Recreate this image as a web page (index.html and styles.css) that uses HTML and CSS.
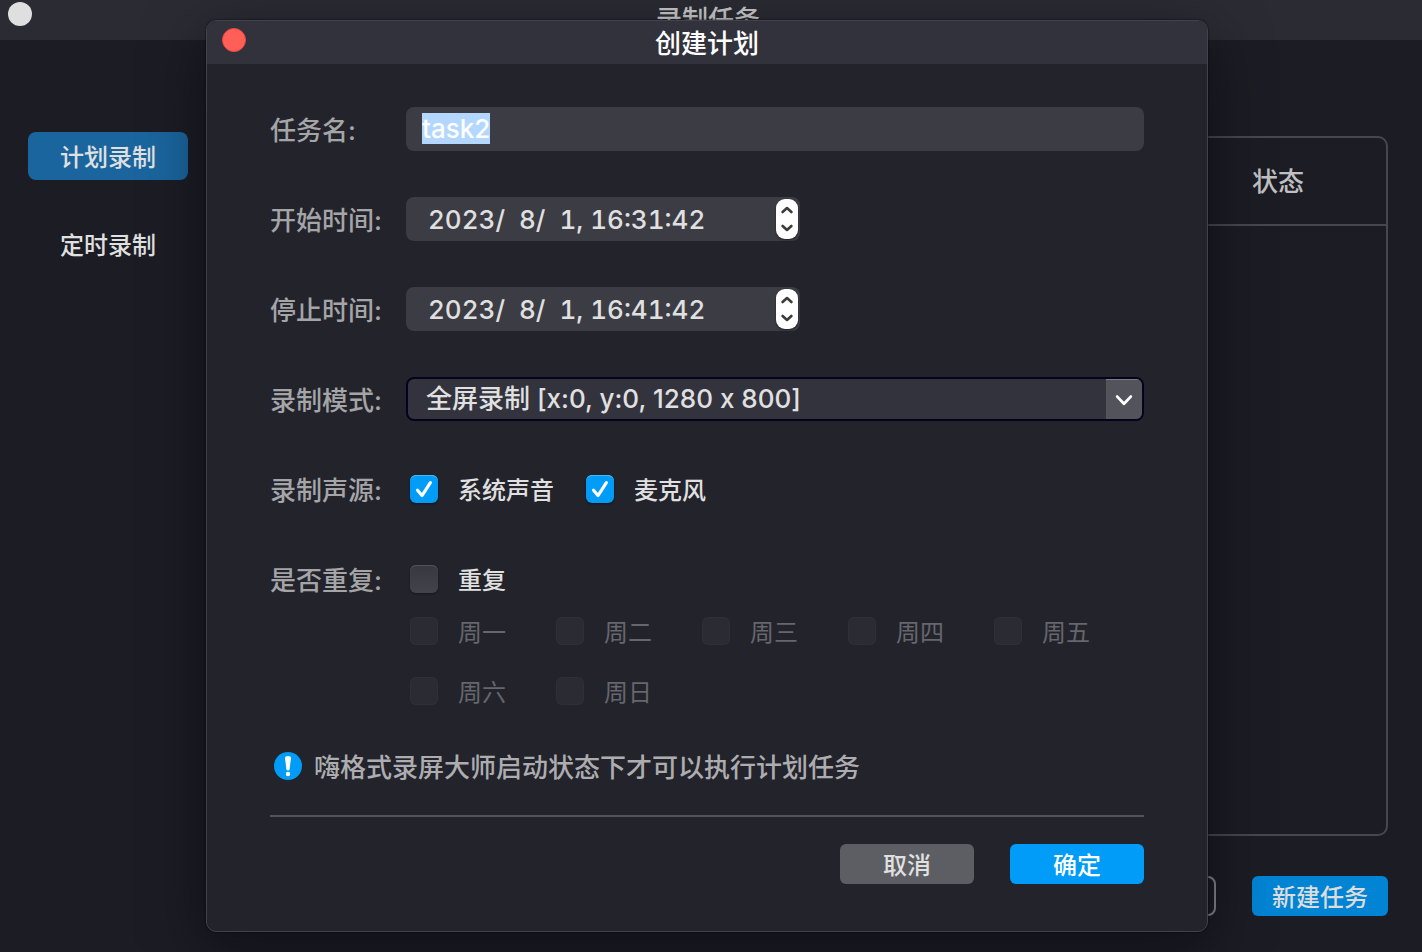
FILE: index.html
```html
<!DOCTYPE html>
<html lang="zh-CN">
<head>
<meta charset="utf-8">
<title>创建计划</title>
<link rel="stylesheet" href="styles.css">
</head>
<body>
<div class="window">
  <header class="window-bar">
    <button class="dot dot-idle" type="button" aria-label="关闭窗口"></button>
    <h1 class="bar-title">录制任务</h1>
  </header>
  <div class="window-body">
    <nav class="sidebar">
      <button class="tab tab-active" type="button">计划录制</button>
      <button class="tab" type="button">定时录制</button>
    </nav>
    <main class="content">
      <div class="task-panel">
        <table class="tasks">
          <thead><tr><th class="spacer"></th><th class="status">状态</th></tr></thead>
        </table>
      </div>
      <div class="window-actions">
        <button class="outline-button" type="button" aria-label="删除任务"></button>
        <button class="button new-task" type="button">新建任务</button>
      </div>
    </main>
  </div>
</div>

<section class="dialog" role="dialog" aria-labelledby="dialog-title">
  <header class="dialog-bar">
    <button class="dot dot-close" type="button" aria-label="关闭"></button>
    <h2 class="bar-title" id="dialog-title">创建计划</h2>
  </header>
  <form class="form">
    <div class="rows">
      <div class="row">
        <label class="label" for="name">任务名:</label>
        <input class="field name" id="name" type="text" value="task2" autocomplete="off" spellcheck="false">
      </div>
      <div class="row">
        <label class="label" for="start">开始时间:</label>
        <div class="field date">
          <input class="date-input" id="start" type="text" value="2023/  8/  1, 16:31:42">
          <div class="stepper">
            <button class="step" type="button" aria-label="增加开始时间"><svg width="12" height="8" viewBox="0 0 12 8"><path d="M1.6 6 6 2 10.4 6"/></svg></button>
            <button class="step" type="button" aria-label="减少开始时间"><svg width="12" height="8" viewBox="0 0 12 8"><path d="M1.6 2 6 6 10.4 2"/></svg></button>
          </div>
        </div>
      </div>
      <div class="row">
        <label class="label" for="stop">停止时间:</label>
        <div class="field date">
          <input class="date-input" id="stop" type="text" value="2023/  8/  1, 16:41:42">
          <div class="stepper">
            <button class="step" type="button" aria-label="增加停止时间"><svg width="12" height="8" viewBox="0 0 12 8"><path d="M1.6 6 6 2 10.4 6"/></svg></button>
            <button class="step" type="button" aria-label="减少停止时间"><svg width="12" height="8" viewBox="0 0 12 8"><path d="M1.6 2 6 6 10.4 2"/></svg></button>
          </div>
        </div>
      </div>
      <div class="row">
        <label class="label" for="mode">录制模式:</label>
        <div class="combo">
          <select class="combo-select" id="mode"><option>全屏录制 [x:0, y:0, 1280 x 800]</option></select>
          <span class="combo-arrow"><svg width="18" height="12" viewBox="0 0 18 12"><path d="M2.2 2.6 9 9.8 15.8 2.6"/></svg></span>
        </div>
      </div>
      <div class="row">
        <span class="label">录制声源:</span>
        <div class="checks">
          <label class="check"><span class="box"><input type="checkbox" checked><svg viewBox="0 0 28 28"><path d="M7.5 15.2 12 20.6 20.4 7.6"/></svg></span><span class="check-text">系统声音</span></label>
          <label class="check"><span class="box"><input type="checkbox" checked><svg viewBox="0 0 28 28"><path d="M7.5 15.2 12 20.6 20.4 7.6"/></svg></span><span class="check-text">麦克风</span></label>
        </div>
      </div>
      <div class="row">
        <span class="label">是否重复:</span>
        <div class="checks">
          <label class="check"><span class="box"><input type="checkbox"></span><span class="check-text">重复</span></label>
        </div>
      </div>
    </div>
    <div class="days">
      <label class="check check-off"><span class="box"><input type="checkbox" disabled></span><span class="check-text">周一</span></label>
      <label class="check check-off"><span class="box"><input type="checkbox" disabled></span><span class="check-text">周二</span></label>
      <label class="check check-off"><span class="box"><input type="checkbox" disabled></span><span class="check-text">周三</span></label>
      <label class="check check-off"><span class="box"><input type="checkbox" disabled></span><span class="check-text">周四</span></label>
      <label class="check check-off"><span class="box"><input type="checkbox" disabled></span><span class="check-text">周五</span></label>
      <label class="check check-off"><span class="box"><input type="checkbox" disabled></span><span class="check-text">周六</span></label>
      <label class="check check-off"><span class="box"><input type="checkbox" disabled></span><span class="check-text">周日</span></label>
    </div>
    <p class="notice">
      <svg class="notice-icon" width="28" height="28" viewBox="0 0 28 28"><circle cx="14" cy="14" r="14" fill="#009cf8"/><path d="M11 6.2Q11 4 14 4T17 6.2L15.6 17.2Q15.4 18.4 14 18.4T12.4 17.2Z" fill="#fff"/><circle cx="14" cy="22" r="2.2" fill="#fff"/></svg>
      <span class="notice-text">嗨格式录屏大师启动状态下才可以执行计划任务</span>
    </p>
    <div class="dialog-actions">
      <button class="button cancel" type="button">取消</button>
      <button class="button confirm" type="button">确定</button>
    </div>
  </form>
</section>
<script src="script.js"></script>
</body>
</html>
```

FILE: styles.css
```css
* { box-sizing: border-box; }

body {
  margin: 0;
  min-height: 100vh;
  background: #1c1c24;
  color: #e0e0e0;
  font-family: Inter, "Noto Sans CJK SC", sans-serif;
  font-size: 24px;
  line-height: 36px;
}

button, input, select { margin: 0; padding: 0; border: 0; font: inherit; color: inherit; }

.window { display: flex; flex-direction: column; min-height: 100vh; }

.window-bar {
  display: grid;
  grid-template-columns: 1fr auto 1fr;
  height: 40px;
  padding: 0 14px 0 8px;
  background: #2b2b33;
  color: #c8c8ca;
}

.dot { width: 24px; height: 24px; border-radius: 50%; }
.dot-idle { margin-top: 2px; background: #dfdfdf; }
.dot-close { background: #ff5f57; border: 1px solid #e8483f; }

.bar-title { margin: 0; padding-top: 2px; grid-column: 2; font-size: 26px; font-weight: 500; line-height: 36px; }

.window-body { flex: 1; display: grid; grid-template-columns: 188px 1fr; gap: 28px; padding: 92px 34px 36px 0; }

.sidebar { display: flex; flex-direction: column; gap: 40px; padding-left: 28px; }
.tab { height: 48px; padding-top: 4px; border-radius: 8px; background: none; font-weight: 500; }
.tab-active { background: #1a659e; }

.content { display: flex; flex-direction: column; gap: 40px; padding-top: 4px; }
.task-panel { flex: 1; border: 2px solid #47474d; border-radius: 10px; }
.tasks { width: 100%; border-collapse: collapse; }
.tasks th { height: 87px; padding: 2px 0 0; border-bottom: 2px solid #47474d; font-size: 26px; font-weight: 500; color: #c0c0c2; }
.tasks .status { width: 216px; }

.window-actions { display: flex; justify-content: flex-end; gap: 36px; }
.outline-button { width: 136px; border: 2px solid #858589; border-radius: 8px; background: none; }
.button { width: 134px; height: 40px; padding-top: 4px; border-radius: 6px; line-height: 36px; font-weight: 500; }
.new-task { width: 136px; background: #0284d4; color: #dcdcdc; }

.dialog {
  position: absolute;
  top: 20px;
  left: 206px;
  right: 214px;
  overflow: clip;
  border: 1px solid #42424c;
  border-radius: 10px;
  background: #23232c;
  box-shadow: 0 0 2px #000, 0 18px 60px rgba(4, 4, 14, 0.5);
}

.dialog-bar {
  display: grid;
  grid-template-columns: 1fr auto 1fr;
  align-items: center;
  height: 43px;
  padding: 0 15px;
  background: #32323d;
  color: #fff;
}
.dialog-bar .dot { margin-bottom: 6px; }

.form { padding: 43px 63px 47px; }
.rows { display: flex; flex-direction: column; gap: 46px; }
.row { display: grid; grid-template-columns: 136px 1fr; align-items: center; height: 44px; }
.label { padding-top: 4px; font-size: 26px; font-weight: 500; color: #a5a5a8; }

.field { height: 44px; border-radius: 8px; background: #3c3c45; }
.name { width: 100%; padding: 4px 16px 6px; outline: 0; font-size: 26px; line-height: 34px; font-weight: 500; }
.name::selection { background: #b3d7ff; color: #fff; }

.date { display: flex; align-items: center; width: 394px; padding: 0 2px 0 22px; font-size: 26px; }
.date-input { flex: 1; min-width: 0; padding-top: 2px; background: none; font-weight: 500; font-feature-settings: "tnum"; }
.stepper { display: flex; flex-direction: column; width: 22px; height: 40px; padding: 2px 0; border-radius: 9px; background: #fff; box-shadow: 0 1px 2px rgba(0, 0, 0, 0.5); }
.step { flex: 1; display: grid; place-items: center; background: none; }
.step path { fill: none; stroke: #3c3c40; stroke-width: 2.6; stroke-linecap: round; stroke-linejoin: round; }

.combo { display: grid; grid-template-columns: 1fr 36px; height: 44px; overflow: clip; border: 2px solid #03031c; border-radius: 8px; background: #33333e; }
.combo-select { grid-area: 1 / 1 / 2 / 3; appearance: none; padding: 0 36px 0 18px; background: none; font-size: 26px; font-weight: 500; font-feature-settings: "calt" 0; }
.combo-arrow { grid-area: 1 / 2; display: grid; place-items: center; border-top: 1px solid #7b7b82; background: #53535c; pointer-events: none; }
.combo-arrow path { fill: none; stroke: #fff; stroke-width: 2.8; stroke-linecap: round; stroke-linejoin: round; }

.checks { display: flex; gap: 32px; padding-left: 4px; }
.check { display: flex; align-items: center; gap: 20px; height: 28px; font-weight: 500; }
.check-text { padding-top: 4px; }
.box { display: grid; width: 28px; height: 28px; }
.box input { grid-area: 1 / 1; appearance: none; border-radius: 6px; background: linear-gradient(#383840, #43434c); box-shadow: inset 0 1px #53535b, 0 1px 2px rgba(0, 0, 0, 0.4); }
.box input:checked { background: #009cf8; box-shadow: inset 0 1px #4bb9f9, 0 1px 2px rgba(0, 0, 0, 0.5); }
.box svg { grid-area: 1 / 1; pointer-events: none; }
.box path { fill: none; stroke: #fff; stroke-width: 3.2; stroke-linecap: round; stroke-linejoin: round; }

.days { display: grid; grid-template-columns: repeat(auto-fill, 146px); gap: 32px 0; margin-top: 16px; padding-left: 140px; }
.check-off { color: #66666d; font-weight: 400; }
.check-off .box input { background: #2b2b34; box-shadow: inset 0 0 0 1px #2f2f38; }

.notice { display: flex; align-items: center; gap: 12px; margin: 41px 0 0; padding: 0 0 29px 4px; border-bottom: 2px solid #53535b; font-size: 26px; font-weight: 500; color: #adadb0; }
.notice-icon { flex: none; }
.notice-text { padding-top: 4px; }

.dialog-actions { display: flex; justify-content: flex-end; gap: 36px; padding-top: 27px; }
.cancel { background: #5d5e63; }
.confirm { background: #009cf8; color: #fff; }
```

FILE: script.js
```js
const nameField = document.getElementById("name");
nameField.focus();
nameField.select();
```
